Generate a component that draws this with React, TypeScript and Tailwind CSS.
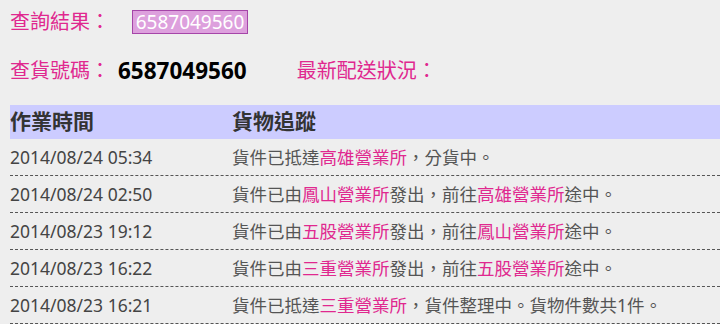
const PINK = 'text-[#e0288f]';

type Part = { t: string; hl?: boolean };

const rows: { time: string; parts: Part[] }[] = [
  {
    time: '2014/08/24 05:34',
    parts: [{ t: '貨件已抵達' }, { t: '高雄營業所', hl: true }, { t: '，分貨中。' }],
  },
  {
    time: '2014/08/24 02:50',
    parts: [
      { t: '貨件已由' },
      { t: '鳳山營業所', hl: true },
      { t: '發出，前往' },
      { t: '高雄營業所', hl: true },
      { t: '途中。' },
    ],
  },
  {
    time: '2014/08/23 19:12',
    parts: [
      { t: '貨件已由' },
      { t: '五股營業所', hl: true },
      { t: '發出，前往' },
      { t: '鳳山營業所', hl: true },
      { t: '途中。' },
    ],
  },
  {
    time: '2014/08/23 16:22',
    parts: [
      { t: '貨件已由' },
      { t: '三重營業所', hl: true },
      { t: '發出，前往' },
      { t: '五股營業所', hl: true },
      { t: '途中。' },
    ],
  },
  {
    time: '2014/08/23 16:21',
    parts: [
      { t: '貨件已抵達' },
      { t: '三重營業所', hl: true },
      { t: '，貨件整理中。貨物件數共1件。' },
    ],
  },
];

export default function App() {
  return (
    <div className="min-h-screen bg-[#eeeeee] pl-[10px] pt-[10px] font-['Noto_Sans','Noto_Sans_CJK_TC',sans-serif] overflow-hidden">
      {/* Result line */}
      <div className="flex h-[24px] items-center">
        <span className={`text-[20px] leading-none ${PINK}`}>查詢結果：</span>
        <span className="ml-[22px] flex h-[24px] w-[116px] items-center justify-center border border-[#a545a8] bg-[#dda0dd] text-[19px] leading-none text-white">
          6587049560
        </span>
      </div>

      {/* Tracking number line */}
      <div className="mt-[22px] flex h-[30px] items-center">
        <span className={`text-[20px] leading-none ${PINK}`}>查貨號碼：</span>
        <span className="ml-[8px] text-[22.5px] font-bold leading-none text-black">6587049560</span>
        <span className={`ml-[50px] text-[20px] leading-none ${PINK}`}>最新配送狀況：</span>
      </div>

      {/* Tracking table */}
      <div className="mt-[19px]">
        <div className="flex h-[34px] items-center bg-[#ccccff] text-[21px] font-bold text-[#333]">
          <div className="w-[222px]">作業時間</div>
          <div>貨物追蹤</div>
        </div>
        {rows.map((r) => (
          <div
            key={r.time}
            className="flex h-[37px] items-center border-b border-dashed border-[#555]"
          >
            <div className="w-[222px] text-[17.5px] text-[#444]">{r.time}</div>
            <div className="text-[17.5px] text-[#555]">
              {r.parts.map((p, i) => (
                <span key={i} className={p.hl ? PINK : ''}>
                  {p.t}
                </span>
              ))}
            </div>
          </div>
        ))}
      </div>
    </div>
  );
}
